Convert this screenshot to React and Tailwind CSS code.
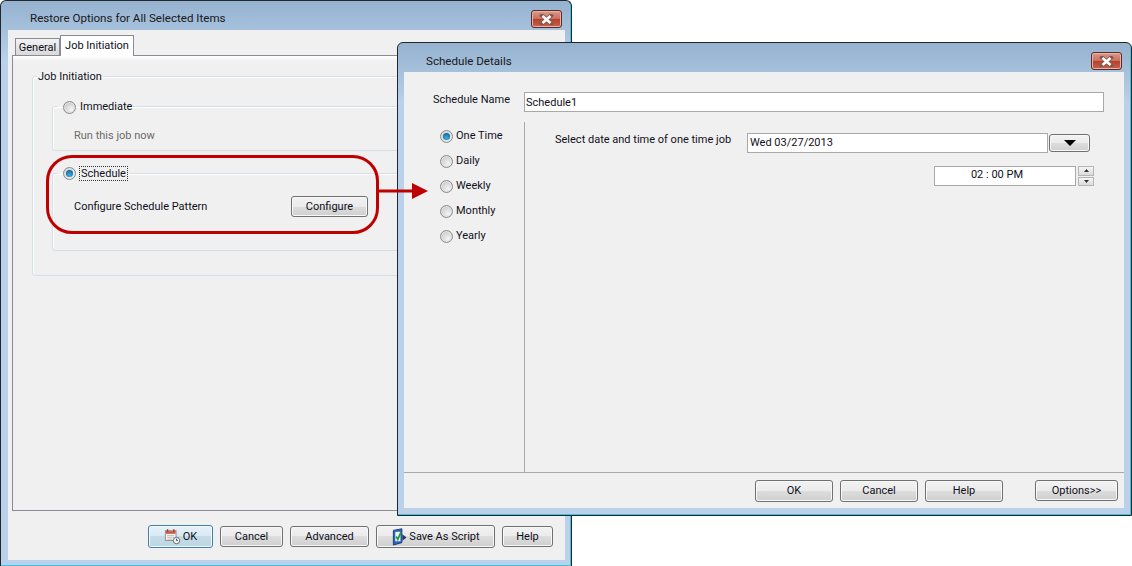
import React from "react";

const font = "font-['Roboto',sans-serif] text-[11px] leading-[16px] text-[#10101c]";

function Radio({ checked }) {
  return (
    <span className="flex h-[13px] w-[13px] shrink-0 items-center justify-center rounded-full border border-[#8a8b8b] bg-[radial-gradient(circle_at_65%_70%,#f4f4f4,#bdbdbd)] shadow-[inset_0_0_0_1px_#e4e4e4]">
      {checked && <span className="h-[7px] w-[7px] rounded-full bg-[radial-gradient(circle_at_50%_70%,#2fb4e8,#0c4f86)]" />}
    </span>
  );
}

function Btn({ className, children, primary }) {
  return (
    <button
      className={
        "flex items-center justify-center rounded-[3px] border shadow-[inset_0_0_0_1px_#f8f8f8] " +
        (primary
          ? "border-[#3c7fb1] bg-[linear-gradient(#e5f1f8_0%,#d9e9f2_50%,#c3dbe8_50%,#c0d6e2_100%)] "
          : "border-[#707070] bg-[linear-gradient(#f2f2f2_0%,#ebebeb_50%,#dddddd_50%,#cfcfcf_100%)] ") +
        className
      }
    >
      {children}
    </button>
  );
}

function CloseBtn() {
  return (
    <span className="flex h-[18px] w-[31px] items-center justify-center rounded-[3px] border border-[#5f2a22] bg-[linear-gradient(#dc9a8c_0%,#c9705f_48%,#b5402c_50%,#c9614c_100%)] shadow-[inset_0_0_0_1px_#e6b3a8]">
      <svg width="15" height="11" viewBox="0 0 15 11">
        <path d="M3 1.5 L12 9.5 M12 1.5 L3 9.5" stroke="#7c5a52" strokeWidth="4" strokeLinecap="square" />
        <path d="M3.5 2 L11.5 9 M11.5 2 L3.5 9" stroke="#ffffff" strokeWidth="2.6" />
      </svg>
    </span>
  );
}

function Group({ legend, className, children }) {
  return (
    <fieldset className={"rounded-[3px] border border-[#d5dfe5] shadow-[inset_1px_1px_0_#ffffff] " + className}>
      <legend className="ml-[4px] h-[16px] px-[1px]">{legend}</legend>
      {children}
    </fieldset>
  );
}

function CalendarIcon() {
  return (
    <svg width="17" height="17" viewBox="0 0 19 18" className="mr-[2px]">
      <rect x="1.5" y="2.5" width="12" height="11" fill="#f4f1ee" stroke="#8c8c8c" />
      <rect x="2" y="3" width="11" height="3" fill="#d4574c" />
      <path d="M4 1v3M11 1v3" stroke="#a33" strokeWidth="1.5" />
      <path d="M3.5 8h8M3.5 10h8M3.5 12h6" stroke="#bdbdbd" />
      <circle cx="14" cy="13.5" r="3.6" fill="#f5f5f5" stroke="#55606b" />
      <path d="M14 11.5v2h1.6" stroke="#333c44" fill="none" />
    </svg>
  );
}

function ScriptIcon() {
  return (
    <svg width="17" height="18" viewBox="0 0 18 19" className="mr-[1px]">
      <path d="M2.5 2.5 L11.5 0.8 V15.5 L2.5 18 Z" fill="#2f62b8" stroke="#1c3a78" />
      <path d="M4.5 4 H10 V14 H4.5 Z" fill="#e8f2fa" />
      <path d="M5.5 9 L7.2 12 L10.5 4.5" stroke="#1f9a2e" strokeWidth="1.8" fill="none" />
      <path d="M12 6.5 L16.5 10 L12 13.5 Z" fill="#1c3a78" />
    </svg>
  );
}

function RestoreWindow() {
  return (
    <div className={"absolute left-0 top-0 flex h-[566px] w-[572px] flex-col rounded-t-[6px] border border-b-0 border-[#23282d] bg-[linear-gradient(#95b2cf_0px,#b9d1ea_60px)] shadow-[inset_-1px_-1px_0_#3cc3dd] " + font}>
      <div className="flex h-[29px] shrink-0 items-center justify-between pl-[29px] pr-[9px] pt-[7px]">
        <span className="pb-[2px] text-[11.6px] text-[#181820]">Restore Options for All Selected Items</span>
        <CloseBtn />
      </div>
      <div className="mb-[6px] ml-[7px] mr-[6px] flex flex-1 flex-col bg-[#f0f0f0] px-[4px]">
        <div className="flex items-end pl-[3px] pt-[5px]">
          <span className="flex h-[17px] w-[45px] items-center justify-center border border-b-0 border-[#898c95] bg-[linear-gradient(#f2f2f2,#d9d9d9)] pt-[2px]">General</span>
          <span className="relative z-10 -mb-px flex h-[21px] w-[74px] items-center justify-center border border-b-0 border-[#898c95] bg-white pb-[1px]">Job Initiation</span>
        </div>
        <div className="h-[456px] border border-[#898c95] bg-[linear-gradient(#ffffff_0px,#f0f0f0_5px)] pl-[19px] pr-[8px] pt-[12px]">
          <Group legend={<span className="block pt-px">Job Initiation</span>} className="h-[208px]">
            <div className="flex flex-col gap-[14px] pl-[19px] pr-[8px] pt-[14px]">
              <Group
                className="h-[53px]"
                legend={
                  <span className="flex h-[16px] items-center gap-[4px] pl-[5px] pt-[2px]">
                    <Radio />
                    Immediate
                  </span>
                }
              >
                <p className="pl-[21px] pt-[14px] text-[#6b6b6b]">Run this job now</p>
              </Group>
              <Group
                className="h-[86px]"
                legend={
                  <span className="flex h-[16px] items-center gap-[3px] pl-[5px]">
                    <Radio checked />
                    <span className="border border-dotted border-[#333] px-[1px] leading-[13px]">Schedule</span>
                  </span>
                }
              >
                <div className="flex w-[315px] items-center justify-between pl-[21px] pt-[15px]">
                  <span>Configure Schedule Pattern</span>
                  <Btn className="h-[21px] w-[77px]">Configure</Btn>
                </div>
              </Group>
            </div>
          </Group>
        </div>
        <div className="flex justify-end gap-[7px] pr-[8px] pt-[14px]">
          <Btn primary className="h-[23px] w-[65px]"><CalendarIcon />OK</Btn>
          <Btn className="mt-px h-[21px] w-[63px]">Cancel</Btn>
          <Btn className="mt-px h-[21px] w-[79px]">Advanced</Btn>
          <Btn className="h-[23px] w-[119px]"><ScriptIcon />Save As Script</Btn>
          <Btn className="mt-px h-[21px] w-[51px]">Help</Btn>
        </div>
      </div>
    </div>
  );
}

function ScheduleWindow() {
  const kinds = ["One Time", "Daily", "Weekly", "Monthly", "Yearly"];
  return (
    <div className={"absolute left-[397px] top-[42px] flex h-[474px] w-[735px] flex-col rounded-t-[6px] border border-[#20262b] bg-[linear-gradient(#95b2cf_0px,#b9d1ea_60px)] shadow-[inset_-1px_-1px_0_#3cc3dd] " + font}>
      <div className="flex h-[29px] shrink-0 items-center justify-between pl-[28px] pr-[9px] pt-[7px]">
        <span className="text-[11.6px] text-[#181820]">Schedule Details</span>
        <CloseBtn />
      </div>
      <div className="mb-[7px] ml-[6px] mr-[7px] flex flex-1 flex-col bg-[#f0f0f0]">
        <div className="flex h-[50px] items-start pt-[20px]">
          <span className="w-[120px] pl-[29px] leading-[16px]">Schedule Name</span>
          <div className="h-[20px] w-[580px] border border-[#a9a9a9] bg-white pl-[1px] leading-[20px]">Schedule1</div>
        </div>
        <div className="flex h-[351px] border-b border-[#a9a9a9]">
          <div className="flex w-[121px] shrink-0 flex-col gap-[9px] border-r border-[#a9a9a9] pl-[36px] pt-[6px]">
            {kinds.map((k, i) => (
              <label key={k} className="flex items-center gap-[3px]">
                <Radio checked={i === 0} />
                {k}
              </label>
            ))}
          </div>
          <div className="flex flex-col pl-[30px] pt-[10px]">
            <div className="flex items-center">
              <span className="w-[192px] whitespace-nowrap pb-[5px]">Select date and time of one time job</span>
              <div className="h-[20px] w-[301px] border border-[#a9a9a9] bg-white pl-[2px] leading-[18px]">Wed 03/27/2013</div>
              <Btn className="ml-px h-[18px] w-[41px]">
                <svg width="12" height="6" viewBox="0 0 12 6"><path d="M0 0H12L6 6Z" fill="#000" /></svg>
              </Btn>
            </div>
            <div className="mt-[13px] flex pl-[379px]">
              <div className="h-[20px] w-[142px] border border-[#a9a9a9] bg-white pr-[16px] text-center leading-[16px]">02 : 00 PM</div>
              <div className="ml-[2px] flex h-[20px] w-[16px] flex-col gap-px">
                <span className="flex flex-1 items-center justify-center border border-[#b5b5b5] bg-[linear-gradient(#f5f5f5,#dcdcdc)]">
                  <svg width="5" height="3" viewBox="0 0 5 3"><path d="M0 3H5L2.5 0Z" fill="#333" /></svg>
                </span>
                <span className="flex flex-1 items-center justify-center border border-[#b5b5b5] bg-[linear-gradient(#f5f5f5,#dcdcdc)]">
                  <svg width="5" height="3" viewBox="0 0 5 3"><path d="M0 0H5L2.5 3Z" fill="#333" /></svg>
                </span>
              </div>
            </div>
          </div>
        </div>
        <div className="flex flex-1 items-start pl-[351px] pt-[7px]">
          <Btn className="h-[22px] w-[78px]">OK</Btn>
          <Btn className="ml-[7px] h-[22px] w-[78px]">Cancel</Btn>
          <Btn className="ml-[7px] h-[22px] w-[78px]">Help</Btn>
          <Btn className="ml-[32px] h-[21px] w-[83px]">Options&gt;&gt;</Btn>
        </div>
      </div>
    </div>
  );
}

export default function App() {
  return (
    <div className="relative h-[566px] w-[1132px] overflow-hidden bg-white">
      <RestoreWindow />
      <ScheduleWindow />
      {/* red callout over both windows */}
      <div className="absolute left-[46px] top-[155px] h-[79px] w-[333px] rounded-[26px] border-[3px] border-[#bf0000]" />
      <svg className="absolute left-[376px] top-[182px]" width="54" height="18" viewBox="0 0 54 18">
        <path d="M0 9H38" stroke="#bf0000" strokeWidth="3" />
        <path d="M36 1L52 9L36 17Z" fill="#bf0000" />
      </svg>
    </div>
  );
}
